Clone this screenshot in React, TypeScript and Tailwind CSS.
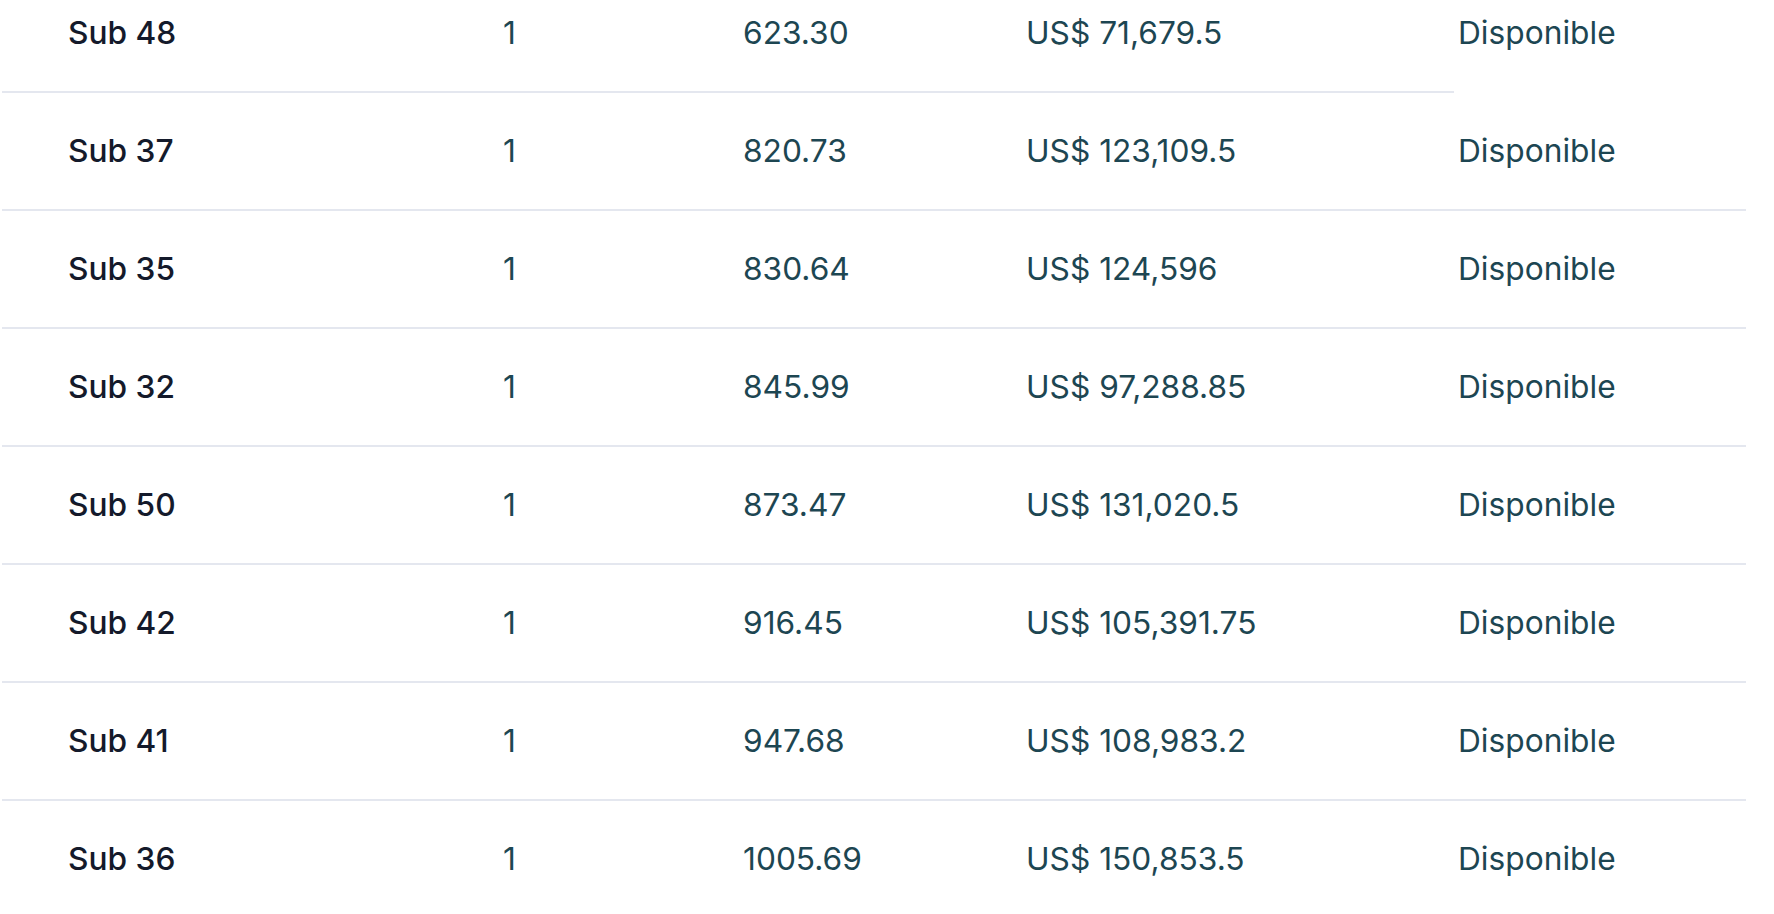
const rows = [
  { name: 'Sub 48', qty: '1', area: '623.30', price: 'US$ 71,679.5' },
  { name: 'Sub 37', qty: '1', area: '820.73', price: 'US$ 123,109.5' },
  { name: 'Sub 35', qty: '1', area: '830.64', price: 'US$ 124,596' },
  { name: 'Sub 32', qty: '1', area: '845.99', price: 'US$ 97,288.85' },
  { name: 'Sub 50', qty: '1', area: '873.47', price: 'US$ 131,020.5' },
  { name: 'Sub 42', qty: '1', area: '916.45', price: 'US$ 105,391.75' },
  { name: 'Sub 41', qty: '1', area: '947.68', price: 'US$ 108,983.2' },
  { name: 'Sub 36', qty: '1', area: '1005.69', price: 'US$ 150,853.5' },
]

export default function App() {
  return (
    <main className="h-screen overflow-hidden bg-white font-['Inter',sans-serif]">
      <div className="-mt-[25px] ml-[2px] w-[1744px]">
        {rows.map((row, i) => (
          <div key={row.name}>
            <div
              className={
                i === 0
                  ? 'grid h-[116px] grid-cols-[435px_240px_283px_432px_1fr] items-center text-[31.7px] text-[#1d4652]'
                  : 'grid h-[118px] grid-cols-[435px_240px_283px_432px_1fr] items-center border-b-2 border-[#e4e7ef] text-[31.7px] text-[#1d4652]'
              }
            >
              <div className="pl-[66px] font-medium text-[#141a2b]">{row.name}</div>
              <div className="pl-[66px]">{row.qty}</div>
              <div className="pl-[66px]">{row.area}</div>
              <div className="pl-[66px]">{row.price}</div>
              <div className="pl-[66px]">Disponible</div>
            </div>
            {i === 0 && <div className="h-[2px] w-[1452px] bg-[#e4e7ef]" />}
          </div>
        ))}
      </div>
    </main>
  )
}
